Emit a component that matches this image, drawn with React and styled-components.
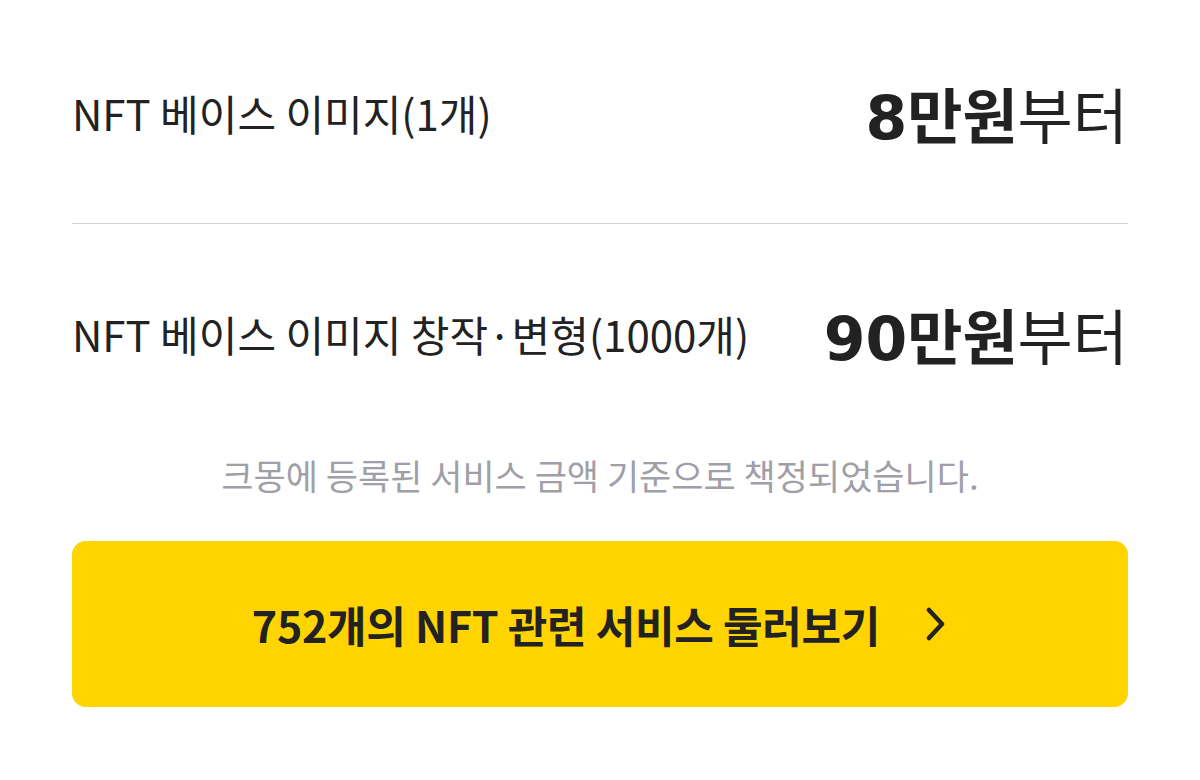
import React from "react";
import styled, { createGlobalStyle } from "styled-components";

const Global = createGlobalStyle`
  html, body { margin: 0; padding: 0; background: #fff; }
  body { font-family: "Noto Sans CJK KR", "Noto Sans", sans-serif; color: #222; }
`;

const Page = styled.div`
  width: 1200px;
  padding: 0 72px;
  box-sizing: border-box;
`;

const Row = styled.div`
  display: flex;
  align-items: center;
  justify-content: space-between;
  height: 60px;
  padding-top: ${(p) => p.$top}px;
  padding-bottom: ${(p) => p.$bottom}px;
`;

const Label = styled.span`
  font-size: 42px;
  font-weight: 400;
  color: #222;
`;

const Price = styled.span`
  font-family: "DejaVu Sans", "Noto Sans CJK KR", sans-serif;
  font-size: 60px;
  font-weight: 400;
  color: #222;
  b { font-weight: 700; }
`;

const Divider = styled.hr`
  margin: 0;
  border: 0;
  height: 1px;
  background: #d4d4d4;
`;

const Note = styled.p`
  margin: 88px 0 0;
  text-align: center;
  font-size: 35px;
  color: #a09fa8;
  line-height: 48px;
`;

const Cta = styled.button`
  margin-top: 42px;
  width: 100%;
  height: 166px;
  border: 0;
  border-radius: 14px;
  background: #ffd400;
  display: flex;
  align-items: center;
  justify-content: center;
  gap: 44px;
  font-family: "Noto Sans CJK KR", sans-serif;
  font-size: 43px;
  font-weight: 700;
  color: #222;
  letter-spacing: -0.3px;
  cursor: pointer;
`;

const Chevron = () => (
  <svg width="24" height="34" viewBox="0 0 24 34" fill="none">
    <path d="M5 3 L18 17 L5 31" stroke="#222" strokeWidth="4.5" strokeLinecap="round" strokeLinejoin="round" />
  </svg>
);

export default function App() {
  return (
    <>
      <Global />
      <Page>
        <Row $top={82} $bottom={81}>
          <Label>NFT 베이스 이미지(1개)</Label>
          <Price><b>8만원</b>부터</Price>
        </Row>
        <Divider />
        <Row $top={79} $bottom={0}>
          <Label>NFT 베이스 이미지 창작·변형(1000개)</Label>
          <Price><b>90만원</b>부터</Price>
        </Row>
        <Note>크몽에 등록된 서비스 금액 기준으로 책정되었습니다.</Note>
        <Cta>
          <span>752개의 NFT 관련 서비스 둘러보기</span>
          <Chevron />
        </Cta>
      </Page>
    </>
  );
}
